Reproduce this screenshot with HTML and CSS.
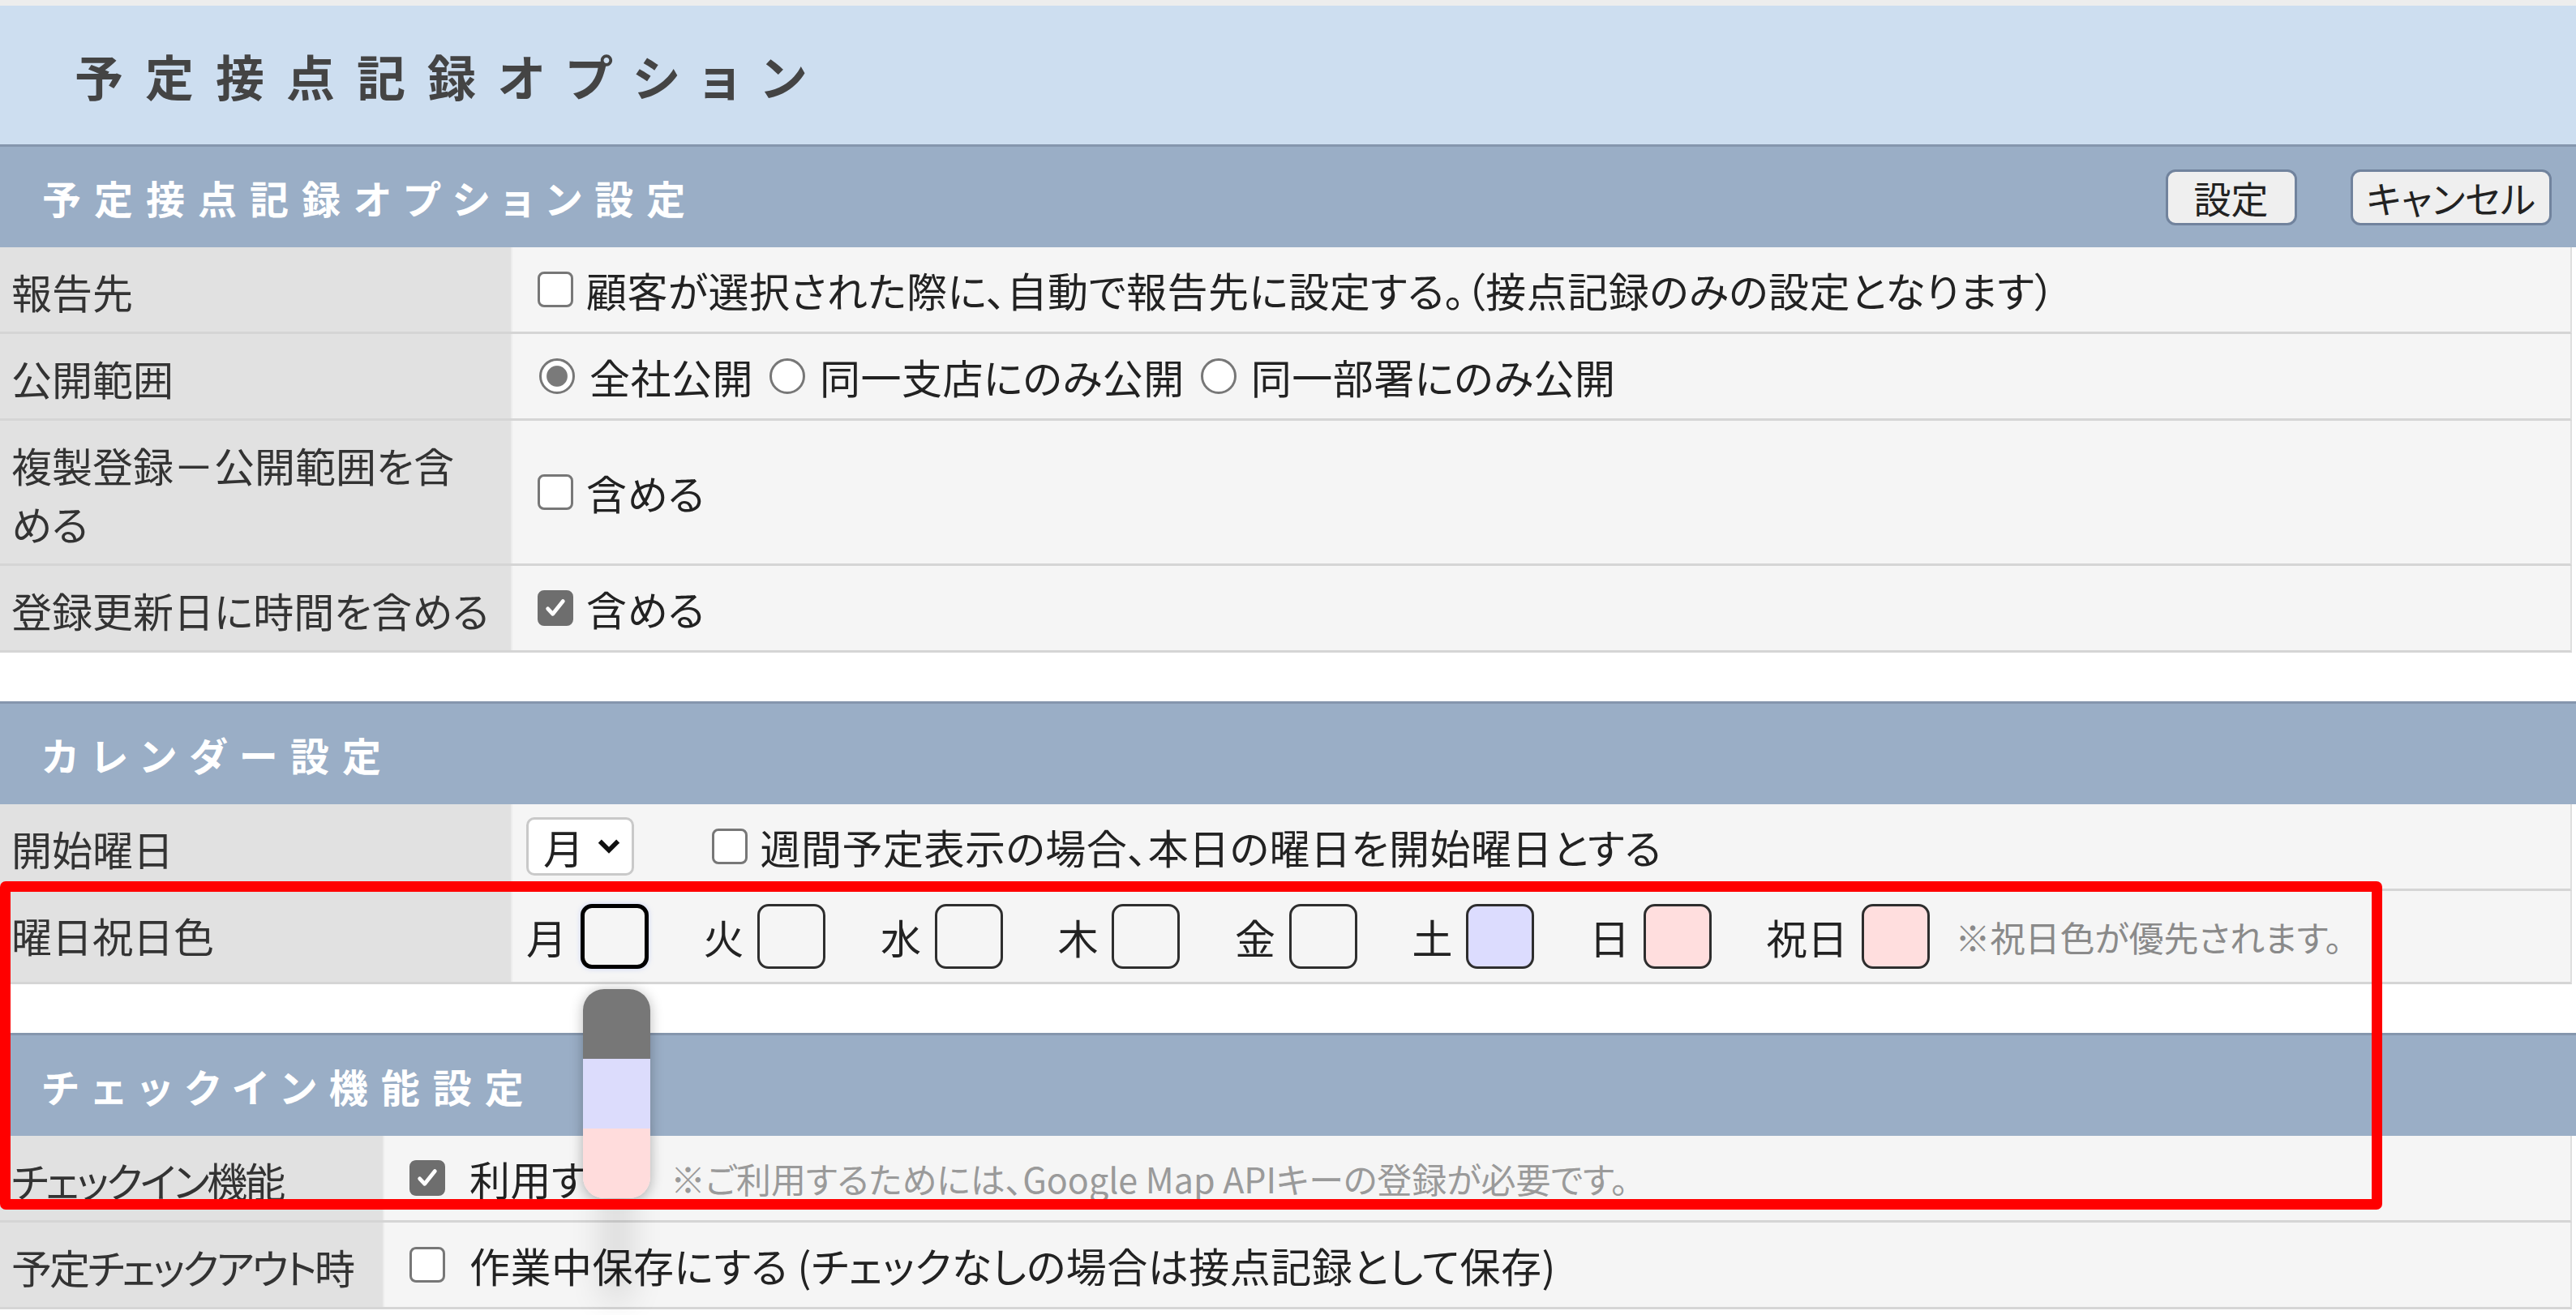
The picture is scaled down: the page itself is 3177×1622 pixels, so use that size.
FILE: index.html
```html
<!DOCTYPE html>
<html lang="ja">
<head>
    <meta charset="utf-8">
    <title>予定接点記録オプション</title>
    <link rel="stylesheet" href="styles.css">
</head>
<body>
<div class="page">
    <h1 class="page-title">予定接点記録オプション</h1>

    <section class="panel">
        <div class="panel-head">
            <h2>予定接点記録オプション設定</h2>
            <div class="actions">
                <button class="btn">設定</button>
                <button class="btn btn-cancel">キャンセル</button>
            </div>
        </div>
        <div class="row">
            <div class="label">報告先</div>
            <div class="value">
                <span class="cb"></span>
                <span>顧客が選択された際に、自動で報告先に設定する。（接点記録のみの設定となります）</span>
            </div>
        </div>
        <div class="row">
            <div class="label">公開範囲</div>
            <div class="value">
                <span class="radio on"></span><span class="opt">全社公開</span>
                <span class="radio"></span><span class="opt">同一支店にのみ公開</span>
                <span class="radio"></span><span class="opt">同一部署にのみ公開</span>
            </div>
        </div>
        <div class="row">
            <div class="label">複製登録－公開範囲を含<br>める</div>
            <div class="value">
                <span class="cb"></span>
                <span>含める</span>
            </div>
        </div>
        <div class="row">
            <div class="label">登録更新日に時間を含める</div>
            <div class="value">
                <span class="cb checked"><svg viewBox="0 0 20 20"><path d="M4.5 10.5l3.6 3.8L15.5 5" fill="none" stroke="#fff" stroke-width="2.8" stroke-linecap="round" stroke-linejoin="round"/></svg></span>
                <span>含める</span>
            </div>
        </div>
    </section>

    <section class="panel">
        <div class="panel-head">
            <h2>カレンダー設定</h2>
        </div>
        <div class="row">
            <div class="label">開始曜日</div>
            <div class="value">
                <div class="select">月<svg viewBox="0 0 20 14"><path d="M3 3l7 7 7-7" fill="none" stroke="#111" stroke-width="3.6"/></svg></div>
                <span class="cb spaced"></span>
                <span>週間予定表示の場合、本日の曜日を開始曜日とする</span>
            </div>
        </div>
        <div class="row">
            <div class="label">曜日祝日色</div>
            <div class="value">
                <span class="day">月<span class="swatch active"></span></span>
                <span class="day">火<span class="swatch"></span></span>
                <span class="day">水<span class="swatch"></span></span>
                <span class="day">木<span class="swatch"></span></span>
                <span class="day">金<span class="swatch"></span></span>
                <span class="day">土<span class="swatch blue"></span></span>
                <span class="day">日<span class="swatch pink"></span></span>
                <span class="day holiday">祝日<span class="swatch pink"></span></span>
                <span class="note">※祝日色が優先されます。</span>
            </div>
        </div>
    </section>

    <section class="panel panel-checkin">
        <div class="panel-head">
            <h2>チェックイン機能設定</h2>
        </div>
        <div class="row">
            <div class="label">チェックイン機能</div>
            <div class="value">
                <span class="cb checked wide"><svg viewBox="0 0 20 20"><path d="M4.5 10.5l3.6 3.8L15.5 5" fill="none" stroke="#fff" stroke-width="2.8" stroke-linecap="round" stroke-linejoin="round"/></svg></span>
                <span>利用する</span>
                <span class="note note-api">※ご利用するためには、Google Map APIキーの登録が必要です。</span>
            </div>
        </div>
        <div class="row">
            <div class="label">予定チェックアウト時</div>
            <div class="value">
                <span class="cb wide"></span>
                <span>作業中保存にする (チェックなしの場合は接点記録として保存)</span>
            </div>
        </div>
    </section>

    <!-- colour picker opened from the 月 swatch -->
    <div class="picker">
        <span class="picker-gray"></span>
        <span class="picker-blue"></span>
        <span class="picker-pink"></span>
    </div>

    <!-- annotation frame -->
    <div class="highlight"></div>
</div>
</body>
</html>
```

FILE: styles.css
```css
body {
    margin: 0;
    font-family: "Noto Sans CJK JP", "Noto Sans", sans-serif;
    font-feature-settings: "palt";
    color: #333;
    background: #fff;
}
.page {
    position: relative;
    overflow: hidden;
    height: 1622px;
}
.page-title {
    margin: 0;
    height: 171px;
    border-top: 7px solid #ededed;
    background: #cddef0;
    padding-left: 92px;
    display: flex;
    align-items: center;
    font-size: 60px;
    font-weight: bold;
    letter-spacing: 27px;
    color: #444;
}
.panel + .panel {
    margin-top: 60px;
}
.panel-head {
    display: flex;
    align-items: center;
    justify-content: space-between;
    height: 124px;
    border-top: 3px solid #8596ad;
    background: #9aaec6;
    padding: 0 30px 0 52px;
}
.panel-head h2 {
    margin: 0;
    font-size: 48px;
    font-weight: bold;
    color: #fff;
    letter-spacing: 16px;
}
.actions {
    display: flex;
    gap: 66px;
}
.btn {
    height: 69px;
    padding: 0 32px;
    font-family: inherit;
    font-feature-settings: "palt";
    font-size: 46px;
    line-height: 1;
    color: #222;
    background: #efefef;
    border: 3px solid #71839d;
    border-radius: 12px;
}
.btn-cancel {
    padding: 0 17px;
}
.row {
    display: flex;
    margin-right: 5px;
    border-bottom: 3px solid #d5d5d5;
    border-right: 2px solid #dedede;
}
.label {
    flex: none;
    width: 632px;
    box-sizing: border-box;
    padding: 18px 14px 14px;
    background: #e1e1e1;
    border-right: 2px solid #ececec;
    font-size: 50px;
    line-height: 72px;
    color: #333;
}
.panel-checkin .label {
    width: 474px;
    white-space: nowrap;
    letter-spacing: -3px;
}
.value {
    flex: 1;
    display: flex;
    align-items: center;
    padding: 16px 17px;
    background: #f5f5f5;
    font-size: 50px;
    line-height: 72px;
    letter-spacing: 0.5px;
    color: #222;
}
.cb {
    flex: none;
    width: 44px;
    height: 44px;
    box-sizing: border-box;
    margin: 0 16px 0 14px;
    border: 3px solid #777;
    border-radius: 8px;
    background: #fff;
    display: flex;
    align-items: center;
    justify-content: center;
}
.cb.checked {
    background: #6e6e6e;
    border-color: #6e6e6e;
}
.cb svg {
    width: 34px;
    height: 34px;
}
.cb.wide {
    margin-right: 30px;
}
.cb.spaced {
    margin-left: 96px;
}
.radio {
    flex: none;
    width: 44px;
    height: 44px;
    box-sizing: border-box;
    margin: 0 18px 0 16px;
    border: 3px solid #777;
    border-radius: 50%;
    background: #fff;
}
.radio.on {
    background: radial-gradient(circle, #7a7a7a 0 46%, #fff 50%);
}
.opt {
    margin-right: 4px;
}
.select {
    flex: none;
    display: flex;
    align-items: center;
    gap: 14px;
    height: 72px;
    box-sizing: border-box;
    padding: 0 12px 0 18px;
    background: #fff;
    border: 3px solid #c9c9c9;
    border-radius: 10px;
    font-size: 50px;
}
.select svg {
    width: 32px;
    height: 24px;
}
.day {
    display: flex;
    align-items: center;
    gap: 16px;
    margin-right: 68px;
}
.day.holiday {
    margin-right: 32px;
}
.swatch {
    width: 84px;
    height: 80px;
    box-sizing: border-box;
    border: 3px solid #2e2e2e;
    border-radius: 14px;
    background: #f5f5f5;
}
.swatch.active {
    border: 5px solid #000;
    box-shadow: 0 0 6px rgba(120, 150, 255, 0.35);
}
.swatch.blue {
    background: #dcdcfe;
}
.swatch.pink {
    background: #ffdede;
}
.note {
    font-size: 43px;
    letter-spacing: 0;
    color: #8a8a8a;
}
.note-api {
    margin-left: 56px;
    color: #9a9a9a;
}
.picker {
    position: absolute;
    left: 719px;
    top: 1220px;
    width: 83px;
    height: 258px;
    display: flex;
    flex-direction: column;
    border-radius: 26px;
    overflow: hidden;
    box-shadow: 0 2px 16px rgba(0, 0, 0, 0.28), 0 150px 40px -24px rgba(0, 0, 0, 0.12);
}
.picker span {
    flex: 1;
}
.picker-gray { background: #777; }
.picker-blue { background: #dcdcfc; }
.picker-pink { background: #ffdcdc; }
.highlight {
    position: absolute;
    left: 0;
    top: 1087px;
    width: 2938px;
    height: 405px;
    box-sizing: border-box;
    border: 13px solid #ff0000;
    border-radius: 7px;
}
```
